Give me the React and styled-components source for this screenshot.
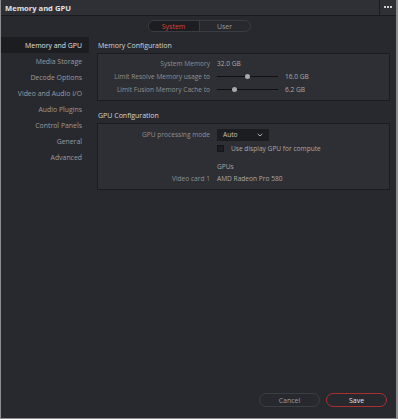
import React from "react";
import styled, { createGlobalStyle } from "styled-components";

const Global = createGlobalStyle`
  html, body { margin: 0; padding: 0; background: #28292e; }
  body { font-family: "Open Sans", "Noto Sans", sans-serif; }
  * { box-sizing: border-box; }
`;

const Window = styled.div`
  width: 398px;
  height: 419px;
  background: #28292e;
  border: 1px solid #8d8d8f;
  border-top: none;
  border-right-width: 2px;
  display: flex;
  flex-direction: column;
  overflow: hidden;
`;

const TitleBar = styled.div`
  height: 16px;
  flex: none;
  display: flex;
  align-items: center;
  background: #2f3035;
  border-bottom: 1px solid #1a1b1f;
`;

const Title = styled.div`
  flex: 1;
  padding-left: 4px;
  font-size: 7.6px;
  font-weight: 700;
  color: #e2e2e2;
`;

const MoreButton = styled.div`
  width: 17px;
  height: 100%;
  border-left: 1px solid #1a1b1f;
  display: flex;
  align-items: center;
  justify-content: center;
  gap: 1.4px;
  padding-bottom: 1px;
`;

const Dot = styled.span`
  width: 2px;
  height: 2px;
  background: #cfcfcf;
`;

const TabsRow = styled.div`
  display: flex;
  justify-content: center;
  padding: 4px 0 5px 1px;
`;

const Tabs = styled.div`
  display: flex;
  width: 103px;
  height: 12px;
  border: 1px solid #3b3c42;
  border-radius: 6px;
  overflow: hidden;
`;

const Tab = styled.div`
  flex: 1;
  display: flex;
  align-items: center;
  justify-content: center;
  font-size: 7px;
  color: ${(p) => (p.$active ? "#d8443f" : "#9a9a9c")};
  background: ${(p) => (p.$active ? "#1c1d21" : "transparent")};
  border-right: ${(p) => (p.$active ? "1px solid #3b3c42" : "none")};
`;

const Main = styled.div`
  flex: 1;
  display: flex;
`;

const Sidebar = styled.div`
  width: 88px;
  flex: none;
  display: flex;
  flex-direction: column;
`;

const SideItem = styled.div`
  height: 16px;
  display: flex;
  align-items: center;
  justify-content: flex-end;
  padding-right: 7px;
  font-size: 6.9px;
  color: ${(p) => (p.$active ? "#e0e0e0" : "#9c9c9e")};
  background: ${(p) => (p.$active ? "#1c1d21" : "transparent")};
`;

const Content = styled.div`
  flex: 1;
  padding: 0 6px 0 8px;
  display: flex;
  flex-direction: column;
`;

const SectionTitle = styled.div`
  height: 16px;
  display: flex;
  align-items: center;
  padding-left: 1px;
  margin-top: ${(p) => p.$mt || 0}px;
  font-size: 7px;
  color: #d6d6d6;
`;

const Box = styled.div`
  background: #2d2f34;
  border: 1px solid #1b1c20;
  padding: ${(p) => p.$pad};
  display: grid;
  grid-template-columns: 112px 1fr;
  column-gap: 7px;
  align-items: center;
`;

const Label = styled.div`
  height: ${(p) => p.$h ?? 13}px;
  display: flex;
  align-items: center;
  justify-content: flex-end;
  font-size: 6.6px;
  color: #8f9093;
  white-space: nowrap;
`;

const Value = styled.div`
  height: ${(p) => p.$h ?? 13}px;
  display: flex;
  align-items: center;
  gap: 7px;
  font-size: 6.6px;
  color: #a9a9ab;
  white-space: nowrap;
`;

const Slider = styled.div`
  position: relative;
  width: 61px;
  height: 1px;
  background: #0f1013;
`;

const Thumb = styled.span`
  position: absolute;
  top: -2px;
  width: 5px;
  height: 5px;
  margin-left: -2.5px;
  border-radius: 50%;
  background: #a9a9ab;
`;

const Select = styled.div`
  width: 52px;
  height: 12px;
  background: #1c1d21;
  display: flex;
  align-items: center;
  justify-content: space-between;
  padding: 0 6px 0 6px;
  font-size: 6.6px;
  color: #c4c4c6;
`;

const Check = styled.span`
  width: 7px;
  height: 7px;
  background: #1c1d21;
  border: 1px solid #141518;
  flex: none;
`;

const Footer = styled.div`
  display: flex;
  justify-content: flex-end;
  gap: 6px;
  padding: 0 9px 11px 0;
`;

const Button = styled.div`
  width: 61px;
  height: 14px;
  border-radius: 7px;
  border: 1px solid ${(p) => (p.$primary ? "#a8302f" : "#3d3e44")};
  display: flex;
  align-items: center;
  justify-content: center;
  font-size: 7px;
  color: ${(p) => (p.$primary ? "#e4e4e4" : "#9c9c9e")};
`;

const Chevron = () => (
  <svg width="6" height="4" viewBox="0 0 6 4">
    <path d="M0.7 0.8 L3 3 L5.3 0.8" fill="none" stroke="#c4c4c6" strokeWidth="0.9" />
  </svg>
);

const sideItems = [
  "Memory and GPU",
  "Media Storage",
  "Decode Options",
  "Video and Audio I/O",
  "Audio Plugins",
  "Control Panels",
  "General",
  "Advanced",
];

export default function App() {
  return (
    <>
      <Global />
      <Window>
        <TitleBar>
          <Title>Memory and GPU</Title>
          <MoreButton>
            <Dot />
            <Dot />
            <Dot />
          </MoreButton>
        </TitleBar>
        <TabsRow>
          <Tabs>
            <Tab $active>System</Tab>
            <Tab>User</Tab>
          </Tabs>
        </TabsRow>
        <Main>
          <Sidebar>
            {sideItems.map((s, i) => (
              <SideItem key={s} $active={i === 0}>
                {s}
              </SideItem>
            ))}
          </Sidebar>
          <Content>
            <SectionTitle>Memory Configuration</SectionTitle>
            <Box $pad="3px 0 4px">
              <Label>System Memory</Label>
              <Value>32.0 GB</Value>
              <Label>Limit Resolve Memory usage to</Label>
              <Value>
                <Slider>
                  <Thumb style={{ left: "50%" }} />
                </Slider>
                16.0 GB
              </Value>
              <Label>Limit Fusion Memory Cache to</Label>
              <Value>
                <Slider>
                  <Thumb style={{ left: "29%" }} />
                </Slider>
                6.2 GB
              </Value>
            </Box>
            <SectionTitle $mt={6}>GPU Configuration</SectionTitle>
            <Box $pad="4px 0 5px">
              <Label>GPU processing mode</Label>
              <Value>
                <Select>
                  Auto
                  <Chevron />
                </Select>
              </Value>
              <Label $h={14} />
              <Value $h={14}>
                <Check />
                Use display GPU for compute
              </Value>
              <Label $h={5} />
              <Value $h={5} />
              <Label $h={12} />
              <Value $h={12}>GPUs</Value>
              <Label $h={12}>Video card 1</Label>
              <Value $h={12}>AMD Radeon Pro 580</Value>
            </Box>
          </Content>
        </Main>
        <Footer>
          <Button>Cancel</Button>
          <Button $primary>Save</Button>
        </Footer>
      </Window>
    </>
  );
}
